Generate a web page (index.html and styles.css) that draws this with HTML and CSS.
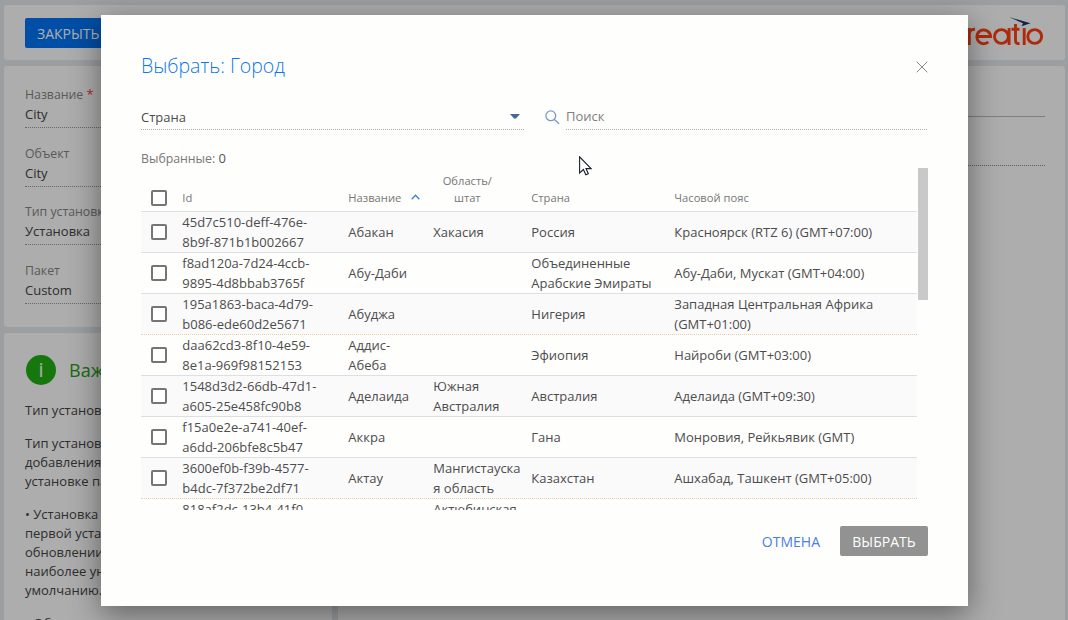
FILE: index.html
```html
<!DOCTYPE html>
<html lang="ru">
<head>
<meta charset="utf-8">
<title>Выбрать: Город</title>
<link rel="stylesheet" href="styles.css">
</head>
<body>
<div class="page">
  <header class="topbar">
    <button class="close-btn">ЗАКРЫТЬ</button>
    <svg class="logo" width="100" height="36" viewBox="0 0 100 36">
      <g fill="none" stroke="#ff4013" stroke-width="2.900">
        <path d="M13 13a8 8 0 1 0 0 12M26.300 29V12M26.300 19q0-6 5.700-5.800"/>
        <path d="M34 20.500H47.600A6.900 6.900 0 1 0 45.300 26"/>
        <circle cx="58.400" cy="20.500" r="6.900"/><path d="M66.100 12v17M72.500 8v16.500q0 3.500 4 3M68.500 13.300h8M81.200 12v17"/>
        <circle cx="91.700" cy="20.500" r="6.900"/>
      </g>
      <path class="logo-wing" d="M66 1 87.500 7.300 78.500 10.200 80 7.300Z"/>
    </svg>
  </header>
  <div class="columns">
    <aside class="side">
      <section class="card fields">
        <div class="field"><label>Название <b>*</b></label><span>City</span></div>
        <div class="field"><label>Объект</label><span>City</span></div>
        <div class="field"><label>Тип установки</label><span>Установка</span></div>
        <div class="field"><label>Пакет</label><span>Custom</span></div>
      </section>
      <section class="card info">
        <h2><i>i</i>Важно</h2>
        <p>Тип установки</p>
        <p>Тип установки<br>добавления<br>установке пакета</p>
        <p>• Установка<br>первой установке<br>обновлении<br>наиболее универсальный<br>умолчанию.</p>
        <p>• Обновление</p>
      </section>
    </aside>
    <main class="card detail"><div class="rule"></div><div class="rule dotted"></div></main>
  </div>
</div>
<div class="overlay">
  <div class="modal">
    <div class="modal-head">
      <h1>Выбрать: Город</h1>
      <svg width="12" height="12" viewBox="0 0 12 12"><path d="M.7.700 11.300 11.300M11.300.700.700 11.300" stroke="#888" fill="none"/></svg>
    </div>
    <div class="filters">
      <div class="select">Страна<svg width="10" height="5" viewBox="0 0 10 5"><path d="M0 0h10L6 4.500H4Z" fill="#43699a"/></svg></div>
      <svg class="search-icon" width="15" height="15" viewBox="0 0 15 15"><g fill="none" stroke="#7b97c9" stroke-width="1.300"><circle cx="5.800" cy="5.800" r="4.900"/><path d="m9.400 9.400 4.800 4.300"/></g></svg>
      <div class="search">Поиск</div>
    </div>
    <div class="selected">Выбранные: <span>0</span></div>
    <div class="grid">
      <div class="rows">
        <div class="row head"><i class="box"></i><span>Id</span><span>Название<svg width="9" height="6" viewBox="0 0 9 6"><path d="m.7 5.200 3.800-4 3.800 4" fill="none" stroke="#3f7fdc" stroke-width="1.300"/></svg></span><span class="region">Область/<br>штат</span><span>Страна</span><span>Часовой пояс</span></div>
        <div class="row"><i class="box"></i><span>45d7c510-deff-476e-<br>8b9f-871b1b002667</span><span>Абакан</span><span>Хакасия</span><span>Россия</span><span>Красноярск (RTZ 6) (GMT+07:00)</span></div>
        <div class="row"><i class="box"></i><span>f8ad120a-7d24-4ccb-<br>9895-4d8bbab3765f</span><span>Абу-Даби</span><span></span><span>Объединенные<br>Арабские Эмираты</span><span>Абу-Даби, Мускат (GMT+04:00)</span></div>
        <div class="row warm"><i class="box"></i><span>195a1863-baca-4d79-<br>b086-ede60d2e5671</span><span>Абуджа</span><span></span><span>Нигерия</span><span>Западная Центральная Африка<br>(GMT+01:00)</span></div>
        <div class="row"><i class="box"></i><span>daa62cd3-8f10-4e59-<br>8e1a-969f98152153</span><span>Аддис-<br>Абеба</span><span></span><span>Эфиопия</span><span>Найроби (GMT+03:00)</span></div>
        <div class="row"><i class="box"></i><span>1548d3d2-66db-47d1-<br>a605-25e458fc90b8</span><span>Аделаида</span><span>Южная<br>Австралия</span><span>Австралия</span><span>Аделаида (GMT+09:30)</span></div>
        <div class="row"><i class="box"></i><span>f15a0e2e-a741-40ef-<br>a6dd-206bfe8c5b47</span><span>Аккра</span><span></span><span>Гана</span><span>Монровия, Рейкьявик (GMT)</span></div>
        <div class="row warm"><i class="box"></i><span>3600ef0b-f39b-4577-<br>b4dc-7f372be2df71</span><span>Актау</span><span>Мангистауска<br>я область</span><span>Казахстан</span><span>Ашхабад, Ташкент (GMT+05:00)</span></div>
        <div class="row last"><i></i><span>818af2dc-13b4-41f0-</span><span></span><span>Актюбинская</span><span></span><span></span></div>
      </div>
      <div class="thumb"></div>
    </div>
    <div class="actions"><button class="cancel">ОТМЕНА</button><button class="choose">ВЫБРАТЬ</button></div>
  </div>
</div>
<svg class="cursor" width="13" height="20" viewBox="0 0 13 20"><path d="M.6.800V17l3.800-3.500 2.400 5.300 2.500-1.100-2.300-5.100h5Z" fill="#fff" stroke="#1b2030" stroke-width="1.100"/></svg>
</body>
</html>
```
FILE: styles.css
```css
* { box-sizing: border-box; }
body { margin: 0; width: 1068px; height: 620px; overflow: hidden; font: 13px/20px "Open Sans", sans-serif; color: #4c4c4c; position: relative; }
h1, h2, p { margin: 0; font-weight: 400; }
button { border: 0; border-radius: 2px; font: 14px/30px "Open Sans", sans-serif; padding: 0; }
.page { height: 620px; padding: 5px 3px 0 4px; background: #e5eaef; color: #444; display: flex; flex-direction: column; gap: 6px; overflow: hidden; }
.topbar, .card { background: #fff; border-radius: 3px; }
.topbar { height: 55px; flex: none; display: flex; justify-content: space-between; align-items: flex-start; padding: 13px 22px 0 21px; }
.close-btn { background: #0073f5; color: #fff; width: 100px; height: 30px; padding: 1px 0 0 12px; text-align: left; }
.logo { margin-top: -2px; }
.logo-wing { fill: #153968; }
.columns { display: flex; gap: 6px; }
.side { width: 328px; flex: none; display: flex; flex-direction: column; gap: 6px; }
.fields { height: 261px; padding: 19px 21px 0; }
.field { height: 58.700px; }
.field label { display: block; color: #858585; font-size: 12.300px; line-height: 19px; white-space: nowrap; }
.field b { color: #ff3b30; font-size: 13px; font-weight: 400; }
.field span { display: block; height: 24px; line-height: 20px; border-bottom: 1px dotted #999; }
.info { height: 420px; padding: 22px 21px; line-height: 19px; white-space: nowrap; overflow: hidden; }
.info h2 { display: flex; align-items: center; gap: 13px; height: 30px; margin-bottom: 16px; font-size: 18px; color: #24a118; }
.info i { width: 30px; height: 30px; margin-left: 1px; border-radius: 50%; background: #21b014; color: #fff; text-align: center; font: 20px/29px "Open Sans", sans-serif; }
.info p { margin-bottom: 14px; }
.detail { flex: 1; height: 700px; padding: 50px 20px; }
.rule { height: 49px; border-top: 1px solid #bbb; }
.dotted { border-top: 1px dotted #888; }
.overlay { position: absolute; inset: 0; background: rgba(0, 0, 0, .32); padding: 15px 100px 0 101px; }
.modal { height: 591px; background: #fefefd; padding: 36px 40px 0; box-shadow: 0 8px 30px rgba(0, 0, 0, .45); }
.modal-head { display: flex; justify-content: space-between; height: 54px; align-items: flex-start; }
.modal-head h1 { font: 300 19.500px/30px "Open Sans", sans-serif; color: #0d78e8; }
.modal-head svg { margin-top: 10px; }
.filters { display: flex; height: 25px; }
.select, .search { border-bottom: 1px dotted #aaa; line-height: 22px; }
.select { width: 383px; display: flex; justify-content: space-between; align-items: center; padding: 0 4px 1px 0; }
.search-icon { margin: 5px 6px 0 21px; }
.search { flex: 1; line-height: 23px; color: #808080; margin-right: 1px; }
.selected { height: 38px; padding-top: 18px; line-height: 20px; color: #777; font-size: 12.300px; }
.selected span { color: #555; font-size: 13px; }
.grid { display: flex; height: 342px; gap: 1px; overflow: hidden; }
.rows { width: 776px; }
.thumb { width: 10px; height: 132px; background: #c9c9c9; }
.row { display: grid; grid-template-columns: 41.300px 166px 85px 98px 143px 1fr; align-items: center; height: 41px; border-bottom: 1px solid #dedfe1; white-space: nowrap; }
.row:nth-child(even) { background: #fafafb; }
.row.warm { border-bottom: 1px dotted #e8cfa4; }
.row.head { height: 44px; align-items: end; padding-bottom: 5px; color: #777; font-size: 11.200px; line-height: 17px; }
.head svg { margin: 0 0 2px 10px; }
.region { width: 68px; text-align: center; }
.box { width: 16px; height: 16px; margin-left: 10px; border: 2px solid #757575; border-radius: 2px; background: #fff; }
.row.last { background: none; border: 0; align-items: start; }
.actions { display: flex; justify-content: flex-end; gap: 20px; padding-top: 16px; }
.actions button { height: 30px; padding-top: 1px; }
.cancel { background: none; color: #4a80df; }
.choose { width: 88px; background: #929292; color: #fff; }
.cursor { position: absolute; left: 579px; top: 156px; }
```
